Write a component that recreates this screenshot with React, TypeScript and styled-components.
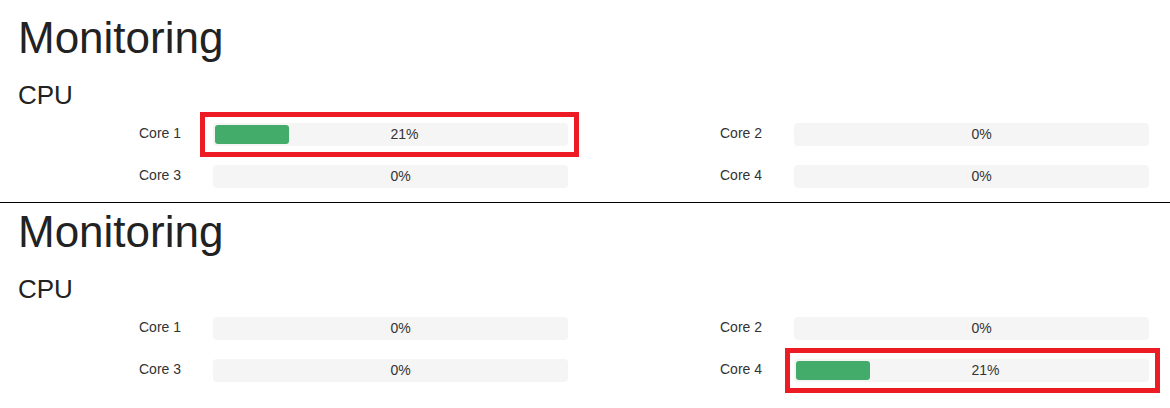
import styled, { createGlobalStyle } from 'styled-components';

const GlobalStyle = createGlobalStyle`
  html, body {
    margin: 0;
    padding: 0;
    background: #ffffff;
  }
  body {
    font-family: 'Liberation Sans', Arial, sans-serif;
    font-size: 14px;
    color: #333333;
  }
`;

const Page = styled.div`
  width: 1170px;
  height: 408px;
  overflow: hidden;
`;

const Panel = styled.section<{ $offsetTop: number; $height: number }>`
  height: ${({ $height }) => $height}px;
  padding: ${({ $offsetTop }) => $offsetTop}px 0 0 0;
  box-sizing: border-box;
  overflow: hidden;
`;

const Divider = styled.hr`
  margin: 0;
  border: 0;
  height: 1px;
  background: #000000;
`;

const Title = styled.h1`
  margin: 0;
  padding-left: 18px;
  font-size: 44px;
  line-height: 48px;
  font-weight: 400;
  color: #222222;
`;

const Subtitle = styled.h3`
  margin: 19px 0 0 0;
  padding-left: 18px;
  font-size: 26px;
  line-height: 28px;
  font-weight: 400;
  color: #222222;
`;

const CoreGrid = styled.div`
  margin-top: 14px;
  display: grid;
  grid-template-columns: repeat(2, 581px);
  row-gap: 19px;
`;

const CoreCell = styled.div`
  display: flex;
  align-items: flex-start;
  padding-left: 139px;
`;

const CoreLabel = styled.div`
  width: 74px;
  line-height: 21px;
  color: #333333;
`;

const TrackWrap = styled.div`
  position: relative;
`;

const Track = styled.div`
  position: relative;
  width: 355px;
  height: 23px;
  padding: 2px;
  box-sizing: border-box;
  background: #f5f5f5;
  border-radius: 4px;
`;

const Bar = styled.div`
  height: 100%;
  background: #43ac6a;
  border-radius: 3px;
`;

const Percent = styled.span`
  position: absolute;
  left: 50%;
  top: 0;
  line-height: 23px;
  color: #333333;
`;

const Highlight = styled.div<{ $left: number }>`
  position: absolute;
  top: -11px;
  bottom: -11px;
  left: -${({ $left }) => $left}px;
  right: -11px;
  border: 5px solid #ed1c24;
  pointer-events: none;
`;

type Core = { name: string; value: number; highlight?: number };

function CoreRow({ core }: { core: Core }) {
  return (
    <CoreCell>
      <CoreLabel>{core.name}</CoreLabel>
      <TrackWrap>
        <Track>
          {core.value > 0 && <Bar style={{ width: `${core.value}%` }} />}
          <Percent>{core.value}%</Percent>
        </Track>
        {core.highlight !== undefined && <Highlight $left={core.highlight} />}
      </TrackWrap>
    </CoreCell>
  );
}

function Monitoring({ cores, offsetTop, height }: { cores: Core[]; offsetTop: number; height: number }) {
  return (
    <Panel $offsetTop={offsetTop} $height={height}>
      <Title>Monitoring</Title>
      <Subtitle>CPU</Subtitle>
      <CoreGrid>
        {cores.map((core) => (
          <CoreRow key={core.name} core={core} />
        ))}
      </CoreGrid>
    </Panel>
  );
}

const before: Core[] = [
  { name: 'Core 1', value: 21, highlight: 13 },
  { name: 'Core 2', value: 0 },
  { name: 'Core 3', value: 0 },
  { name: 'Core 4', value: 0 },
];

const after: Core[] = [
  { name: 'Core 1', value: 0 },
  { name: 'Core 2', value: 0 },
  { name: 'Core 3', value: 0 },
  { name: 'Core 4', value: 21, highlight: 9 },
];

export default function App() {
  return (
    <>
      <GlobalStyle />
      <Page>
        <Monitoring cores={before} offsetTop={14} height={202} />
        <Divider />
        <Monitoring cores={after} offsetTop={5} height={205} />
      </Page>
    </>
  );
}
